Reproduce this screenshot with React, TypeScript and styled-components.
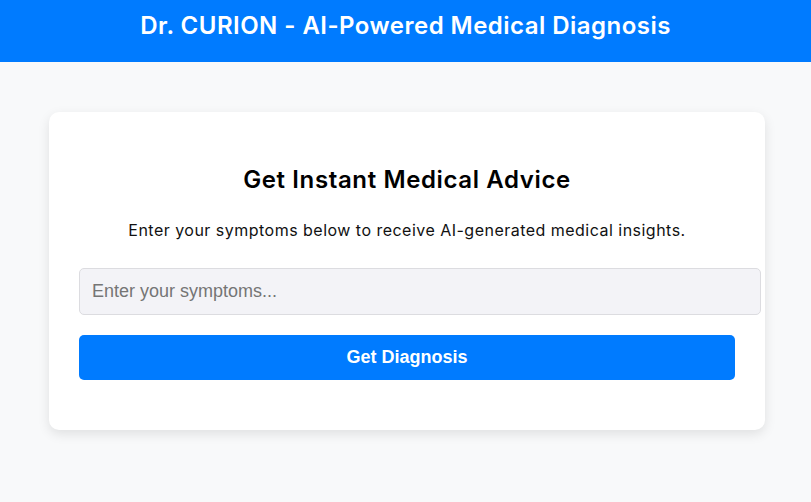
import React from "react";
import styled, { createGlobalStyle } from "styled-components";

const Global = createGlobalStyle`
  html, body { margin: 0; padding: 0; }
  body {
    background: #f8f9fa;
    font-family: "Inter", "Open Sans", sans-serif;
  }
`;

const Header = styled.header`
  background: #007bff;
  height: 62px;
  box-sizing: border-box;
  padding-top: 8px;
  text-align: center;
`;

const Title = styled.h1`
  margin: 0;
  color: #fff;
  font-family: "Inter", sans-serif;
  font-weight: 600;
  font-size: 24px;
  line-height: 36px;
  letter-spacing: 0.47px;
`;

const Main = styled.main`
  padding: 50px 0 50px 49px;
`;

const Card = styled.section`
  width: 656px;
  padding: 30px;
  background: #fff;
  border-radius: 10px;
  box-shadow: 0 4px 12px rgba(0, 0, 0, 0.1);
  text-align: center;
`;

const Heading = styled.h2`
  margin: 20px 0 20px;
  font-family: "Inter", sans-serif;
  font-weight: 600;
  font-size: 24px;
  line-height: 36px;
  letter-spacing: 0.62px;
  color: #000;
`;

const Lead = styled.p`
  margin: 0 0 26px;
  font-family: "Inter", sans-serif;
  font-size: 16px;
  line-height: 24px;
  letter-spacing: 0.48px;
  color: #111;
`;

const Input = styled.input`
  display: block;
  width: 100%;
  box-sizing: content-box;
  margin: 0;
  padding: 12px;
  font-family: "Liberation Sans", Arial, sans-serif;
  font-size: 18px;
  line-height: 21px;
  border: 1px solid #dcdce0;
  border-radius: 5px;
  background: #f3f3f7;
  color: #333;
  outline: none;
  &::placeholder { color: #757575; }
`;

const Button = styled.button`
  display: block;
  width: 100%;
  margin: 20px 0 20px;
  padding: 12px;
  border: none;
  border-radius: 5px;
  background: #007bff;
  color: #fff;
  font-family: "Liberation Sans", Arial, sans-serif;
  font-weight: 700;
  font-size: 18px;
  line-height: 21px;
  cursor: pointer;
`;

export default function App() {
  return (
    <>
      <Global />
      <Header>
        <Title>Dr. CURION - AI-Powered Medical Diagnosis</Title>
      </Header>
      <Main>
        <Card>
          <Heading>Get Instant Medical Advice</Heading>
          <Lead>Enter your symptoms below to receive AI-generated medical insights.</Lead>
          <Input placeholder="Enter your symptoms..." />
          <Button>Get Diagnosis</Button>
        </Card>
      </Main>
    </>
  );
}
